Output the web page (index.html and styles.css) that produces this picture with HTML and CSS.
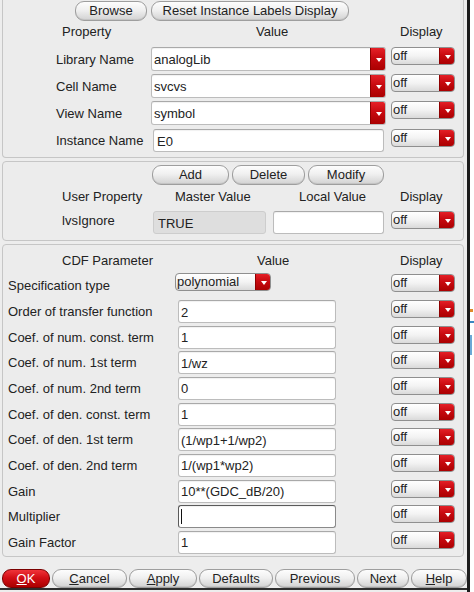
FILE: index.html
```html
<!DOCTYPE html>
<html>
<head>
<meta charset="utf-8">
<title>Edit Object Properties</title>
<link rel="stylesheet" href="styles.css">
</head>
<body>
<div class="screen">
  <div class="dialog">
    <section class="panel p1">
      <div class="btnrow p1-btns">
        <button class="btn w-browse">Browse</button>
        <button class="btn w-reset">Reset Instance Labels Display</button>
      </div>
      <div class="hdr p1-hdr">
        <span class="h1">Property</span>
        <span class="h2">Value</span>
        <span class="h3">Display</span>
      </div>
      <div class="rows p1-rows">
        <div class="row">
          <span class="lbl">Library Name</span>
          <div class="field combo"><span class="txt">analogLib</span><span class="arrow"></span></div>
          <div class="sel disp"><span class="txt">off</span><span class="arrow"></span></div>
        </div>
        <div class="row">
          <span class="lbl">Cell Name</span>
          <div class="field combo"><span class="txt">svcvs</span><span class="arrow"></span></div>
          <div class="sel disp"><span class="txt">off</span><span class="arrow"></span></div>
        </div>
        <div class="row">
          <span class="lbl">View Name</span>
          <div class="field combo"><span class="txt">symbol</span><span class="arrow"></span></div>
          <div class="sel disp"><span class="txt">off</span><span class="arrow"></span></div>
        </div>
        <div class="row">
          <span class="lbl">Instance Name</span>
          <div class="field inst"><span class="txt">E0</span></div>
          <div class="sel disp inst-disp"><span class="txt">off</span><span class="arrow"></span></div>
        </div>
      </div>
    </section>

    <section class="panel p2">
      <div class="btnrow p2-btns">
        <button class="btn w-add">Add</button>
        <button class="btn w-del">Delete</button>
        <button class="btn w-mod">Modify</button>
      </div>
      <div class="hdr p2-hdr">
        <span class="h1">User Property</span>
        <span class="h2">Master Value</span>
        <span class="h3">Local Value</span>
        <span class="h4">Display</span>
      </div>
      <div class="row p2-row">
        <span class="lbl">lvsIgnore</span>
        <div class="field ro"><span class="txt">TRUE</span></div>
        <div class="field local"><span class="txt"></span></div>
        <div class="sel disp"><span class="txt">off</span><span class="arrow"></span></div>
      </div>
    </section>

    <section class="panel p3">
      <div class="hdr p3-hdr">
        <span class="h1">CDF Parameter</span>
        <span class="h2">Value</span>
        <span class="h3">Display</span>
      </div>
      <div class="row spec-row">
        <span class="lbl">Specification type</span>
        <div class="valcol"><div class="sel poly"><span class="txt">polynomial</span><span class="arrow"></span></div></div>
        <div class="sel disp"><span class="txt">off</span><span class="arrow"></span></div>
      </div>
      <div class="rows p3-rows">
        <div class="row">
          <span class="lbl">Order of transfer function</span>
          <div class="valcol"><div class="field param"><span class="txt">2</span></div></div>
          <div class="sel disp"><span class="txt">off</span><span class="arrow"></span></div>
        </div>
        <div class="row">
          <span class="lbl">Coef. of num. const. term</span>
          <div class="valcol"><div class="field param"><span class="txt">1</span></div></div>
          <div class="sel disp"><span class="txt">off</span><span class="arrow"></span></div>
        </div>
        <div class="row">
          <span class="lbl">Coef. of num. 1st term</span>
          <div class="valcol"><div class="field param"><span class="txt">1/wz</span></div></div>
          <div class="sel disp"><span class="txt">off</span><span class="arrow"></span></div>
        </div>
        <div class="row">
          <span class="lbl">Coef. of num. 2nd term</span>
          <div class="valcol"><div class="field param"><span class="txt">0</span></div></div>
          <div class="sel disp"><span class="txt">off</span><span class="arrow"></span></div>
        </div>
        <div class="row">
          <span class="lbl">Coef. of den. const. term</span>
          <div class="valcol"><div class="field param"><span class="txt">1</span></div></div>
          <div class="sel disp"><span class="txt">off</span><span class="arrow"></span></div>
        </div>
        <div class="row">
          <span class="lbl">Coef. of den. 1st term</span>
          <div class="valcol"><div class="field param"><span class="txt">(1/wp1+1/wp2)</span></div></div>
          <div class="sel disp"><span class="txt">off</span><span class="arrow"></span></div>
        </div>
        <div class="row">
          <span class="lbl">Coef. of den. 2nd term</span>
          <div class="valcol"><div class="field param"><span class="txt">1/(wp1*wp2)</span></div></div>
          <div class="sel disp"><span class="txt">off</span><span class="arrow"></span></div>
        </div>
        <div class="row">
          <span class="lbl">Gain</span>
          <div class="valcol"><div class="field param"><span class="txt">10**(GDC_dB/20)</span></div></div>
          <div class="sel disp"><span class="txt">off</span><span class="arrow"></span></div>
        </div>
        <div class="row">
          <span class="lbl">Multiplier</span>
          <div class="valcol"><div class="field param focus"><span class="caret"></span></div></div>
          <div class="sel disp"><span class="txt">off</span><span class="arrow"></span></div>
        </div>
        <div class="row">
          <span class="lbl">Gain Factor</span>
          <div class="valcol"><div class="field param"><span class="txt">1</span></div></div>
          <div class="sel disp"><span class="txt">off</span><span class="arrow"></span></div>
        </div>
      </div>
    </section>

    <div class="actions">
      <button class="btn act ok w-ok"><u>O</u>K</button>
      <button class="btn act w-cancel"><u>C</u>ancel</button>
      <button class="btn act w-apply"><u>A</u>pply</button>
      <button class="btn act w-defaults">Defaults</button>
      <button class="btn act w-prev">Previous</button>
      <button class="btn act w-next">Next</button>
      <button class="btn act w-help"><u>H</u>elp</button>
    </div>
    <div class="bottom-line"></div>
  </div>
  <div class="edge"></div>
  <div class="behind">
    <span class="speck orange"></span>
    <span class="speck blue b1"></span>
    <span class="speck blue b2"></span>
  </div>
</div>
</body>
</html>
```

FILE: styles.css
```css
* { box-sizing: border-box; }
html, body { margin: 0; padding: 0; }
body {
  width: 474px;
  height: 592px;
  overflow: hidden;
  background: #ededed;
  font-family: "Liberation Sans", Arial, sans-serif;
  font-size: 13px;
  color: #222;
}
.screen { display: flex; height: 592px; }
.dialog {
  width: 467px;
  display: flex;
  flex-direction: column;
  background: #ededed;
}
.edge { width: 3px; background: #1c1c1c; }
.behind {
  width: 4px;
  background: #ffffff;
  display: flex;
  flex-direction: column;
}
.speck { display: block; height: 3px; }
.orange { margin-top: 309px; background: #e08a2a; width: 3px; }
.blue.b1 { margin-top: 9px; background: #3a86c0; height: 2px; }
.blue.b2 { margin-top: 12px; background: #6aa8d6; height: 20px; width: 2px; }

/* panels */
.panel {
  margin-left: 2px;
  width: 462px;
  border: 1px solid #c6c6c6;
  border-radius: 4px;
  background: #ececec;
  flex: none;
}
.p1 { border-top: none; border-radius: 0 0 4px 4px; height: 158px; padding-top: 1px; }
.p2 { margin-top: 3px; height: 80px; padding-top: 3px; }
.p3 { margin-top: 3px; height: 313px; padding-top: 4px; }

/* buttons */
.btn {
  font-family: inherit;
  font-size: 13px;
  color: #222;
  margin: 0;
  padding: 0;
  height: 20px;
  border: 1px solid #9e9e9e;
  border-radius: 9px;
  background: linear-gradient(#fdfdfd 0%, #f0f0f0 45%, #d2d2d2 100%);
  box-shadow: inset 0 -1px 0 #c4c4c4;
  line-height: 18px;
  text-align: center;
  flex: none;
}
.btn u { text-decoration: underline; text-underline-offset: 1px; }
.btnrow { display: flex; height: 20px; }
.p1-btns { padding-left: 72px; gap: 4px; }
.w-browse { width: 72px; }
.w-reset { width: 198px; }
.p2-btns { padding-left: 149px; gap: 3px; }
.w-add { width: 77px; }
.w-del { width: 73px; }
.w-mod { width: 76px; }

/* headers */
.hdr { display: flex; height: 22px; align-items: center; padding-left: 59px; }
.hdr span { flex: none; }
.p1-hdr { height: 20px; }
.p1-hdr .h1 { width: 194px; }
.p1-hdr .h2 { width: 144px; }
.p2-hdr .h1 { width: 113px; }
.p2-hdr .h2 { width: 124px; }
.p2-hdr .h3 { width: 101px; }
.p3-hdr .h1 { width: 195px; }
.p3-hdr .h2 { width: 143px; }

/* rows */
.rows { display: flex; flex-direction: column; }
.row { display: flex; align-items: flex-start; flex: none; }
.lbl { flex: none; white-space: nowrap; align-self: center; }

.p1-rows { margin-top: 6px; gap: 3px; padding-left: 53px; }
.p1-rows .row { height: 24px; }
.p1-rows .lbl { width: 95px; }
.p1-rows .field { width: 235px; height: 24px; }
.p1-rows .disp { margin-left: 5px; }
.field.inst { width: 231px; height: 23px; margin: 1px 2px 0 2px; }
.field.inst .txt { padding-left: 3px; }
.inst-disp { margin-top: 1px; }

.p2-row { margin-top: 4px; height: 23px; padding-left: 59px; }
.p2-row .lbl { width: 91px; align-self: flex-start; padding-top: 2px; }
.field.ro {
  width: 113px;
  height: 23px;
  background: #dedede;
  border-color: #cdcdcd;
  box-shadow: none;
}
.field.ro .txt { padding-left: 4px; }
.field.local { width: 111px; height: 23px; margin-left: 7px; }
.p2-row .disp { margin-left: 7px; }

.p3 .row { padding-left: 5px; }
.p3 .lbl { width: 167px; }
.valcol { width: 216px; flex: none; display: flex; }
.spec-row { margin-top: 2px; height: 24px; }
.spec-row .lbl { align-self: flex-start; padding-top: 5px; }
.spec-row .disp { margin-top: 1px; }
.p3-rows { margin-top: 3px; gap: 2.67px; }
.p3-rows .row { height: 23px; }
.field.param { width: 158px; height: 23px; margin-left: 3px; }

/* text fields */
.field {
  display: flex;
  flex: none;
  background: #ffffff;
  border: 1px solid #bcbcbc;
  border-top-color: #a9a9a9;
  border-radius: 3px;
  box-shadow: inset 0 1px 1px rgba(0, 0, 0, 0.06);
  overflow: hidden;
}
.field .txt {
  flex: 1;
  padding-left: 2px;
  align-self: center;
  white-space: nowrap;
  line-height: 15px;
  padding-top: 1px;
}
.field.focus { border-color: #5a5a5a; border-bottom-color: #8a8a8a; border-right-color: #8a8a8a; }
.caret {
  display: block;
  width: 1px;
  height: 15px;
  margin-left: 2px;
  align-self: center;
  background: #111;
}

/* dropdown arrow */
.arrow {
  width: 16px;
  flex: none;
  align-self: stretch;
  display: flex;
  align-items: center;
  justify-content: center;
  background: linear-gradient(#e8232a 0%, #c80a10 45%, #a80000 100%);
  border-left: 1px solid #8e0000;
  border-radius: 0 3px 3px 0;
}
.arrow::after {
  content: "";
  display: block;
  width: 0;
  height: 0;
  margin-top: 2px;
  border-left: 3.5px solid transparent;
  border-right: 3.5px solid transparent;
  border-top: 4px solid #ffffff;
}
.combo .arrow { margin: -1px -1px -1px 0; border-radius: 0 3px 3px 0; }

/* selects */
.sel {
  display: flex;
  flex: none;
  height: 18px;
  border: 1px solid #8f8f8f;
  border-radius: 4px;
  background: linear-gradient(#ffffff 0%, #f3f3f3 50%, #dadada 100%);
  overflow: hidden;
}
.sel .txt { flex: 1; padding-left: 1px; line-height: 16px; white-space: nowrap; }
.sel .arrow { margin: -1px -1px -1px 0; }
.disp { width: 64px; }
.sel.poly { width: 96px; }

/* action buttons */
.actions {
  display: flex;
  gap: 2px;
  padding: 12px 0 0 2px;
  height: 31px;
  flex: none;
}
.btn.act { height: 19px; line-height: 17px; }
.btn.ok {
  color: #ffffff;
  border-color: #7a0000;
  background: linear-gradient(#f0343a 0%, #d30f16 45%, #aa0000 100%);
  box-shadow: none;
}
.w-ok { width: 48px; }
.w-cancel { width: 75px; }
.w-apply { width: 68px; }
.w-defaults { width: 74px; }
.w-prev { width: 80px; }
.w-next { width: 52px; }
.w-help { width: 56px; }
.bottom-line {
  height: 2px;
  background: #2e2e2e;
  flex: none;
}
```
